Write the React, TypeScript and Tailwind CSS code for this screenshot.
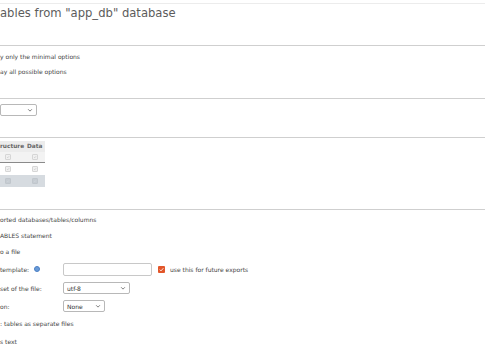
const Check = ({ color = '#b5b5b5' }: { color?: string }) => (
  <svg viewBox="0 0 10 10" className="w-full h-full">
    <path d="M2.5 5.2 L4.3 7 L7.6 3.2" fill="none" stroke={color} strokeWidth="1.2" />
  </svg>
);

const Chevron = () => (
  <svg viewBox="0 0 8 8" className="w-[6px] h-[6px]">
    <path d="M1.5 3 L4 5.5 L6.5 3" fill="none" stroke="#666" strokeWidth="1.1" />
  </svg>
);

const Select = ({ label, width }: { label: string; width: string }) => (
  <div
    className={`${width} h-[12px] border border-[#b8b8b8] rounded-[2px] bg-white flex items-center justify-between pl-[3px] pr-[3px] text-[6px] text-[#333]`}
  >
    <span>{label}</span>
    <Chevron />
  </div>
);

const Box = ({ shaded }: { shaded?: boolean }) => (
  <div
    className={`w-[6px] h-[6px] border rounded-[1px] ${shaded ? 'bg-[#c6ccd2] border-[#c0c6cc]' : 'bg-[#f0f0f0] border-[#d6d6d6]'}`}
  >
    <Check color={shaded ? '#d8dde2' : '#b5b5b5'} />
  </div>
);

const Row = ({ children, h = 'h-[16px]' }: { children: React.ReactNode; h?: string }) => (
  <div className={`${h} flex items-center`}>{children}</div>
);

export default function App() {
  return (
    <div
      className="w-[485px] h-[360px] overflow-hidden bg-white text-[#444] text-[6px]"
      style={{ fontFamily: '"DejaVu Sans", sans-serif' }}
    >
      <div className="h-[3px]" />
      <div className="border-t border-[#ececec]" />

      {/* heading */}
      <div className="h-[41px] pt-[1px]">
        <h2 className="text-[11.6px] leading-[16px] text-[#5c5c5c]">ables from "app_db" database</h2>
      </div>
      <div className="border-t border-[#cfcfcf]" />

      {/* export method */}
      <div className="h-[52px] pt-[3px]">
        <Row h="h-[15px]">y only the minimal options</Row>
        <Row h="h-[15px]">ay all possible options</Row>
      </div>
      <div className="border-t border-[#cfcfcf]" />

      {/* format */}
      <div className="h-[38px] pt-[5px]">
        <div className="w-[37px] h-[12px] border border-[#b8b8b8] rounded-[2px] bg-white flex items-center justify-end pr-[3px]">
          <Chevron />
        </div>
      </div>
      <div className="border-t border-[#cfcfcf]" />

      {/* tables */}
      <div className="h-[71px] pt-[3px]">
        <div className="w-[45px] bg-[#f3f3f3] text-[5.8px]">
          <div className="h-[11px] flex items-center font-bold text-[#666] bg-[#ececec]">
            <span className="w-[27px]">ructure</span>
            <span>Data</span>
          </div>
          <div className="h-[11px] flex items-center border-b border-[#8a8a8a]">
            <div className="w-[32px] pl-[5px]"><Box /></div>
            <Box />
          </div>
          <div className="h-[12px] flex items-center bg-white">
            <div className="w-[32px] pl-[5px]"><Box /></div>
            <Box />
          </div>
          <div className="h-[12px] flex items-center bg-[#d6dbe0]">
            <div className="w-[32px] pl-[5px]"><Box shaded /></div>
            <Box shaded />
          </div>
        </div>
      </div>
      <div className="border-t border-[#cfcfcf]" />

      {/* output */}
      <div className="pt-[1px]">
        <Row>orted databases/tables/columns</Row>
        <Row>ABLES statement</Row>
        <Row>o a file</Row>
        <Row h="h-[20px]">
          <div className="w-[63px] flex items-center">
            <span>template:</span>
            <span className="ml-[5px] w-[6px] h-[6px] rounded-full bg-[#6a9bd8] border border-[#4a7fc4]" />
          </div>
          <div className="w-[89px] h-[13px] border border-[#c8c8c8] rounded-[2px] bg-white" />
          <div className="ml-[6px] w-[7px] h-[7px] rounded-[1px] bg-[#e2562a]">
            <Check color="#fff" />
          </div>
          <span className="ml-[5px]">use this for future exports</span>
        </Row>
        <Row h="h-[18px]">
          <span className="w-[63px]">set of the file:</span>
          <Select label="utf-8" width="w-[67px]" />
        </Row>
        <Row h="h-[18px]">
          <span className="w-[63px]">on:</span>
          <Select label="None" width="w-[42px]" />
        </Row>
        <Row h="h-[17px]">: tables as separate files</Row>
        <Row h="h-[19px]">s text</Row>
      </div>
    </div>
  );
}
